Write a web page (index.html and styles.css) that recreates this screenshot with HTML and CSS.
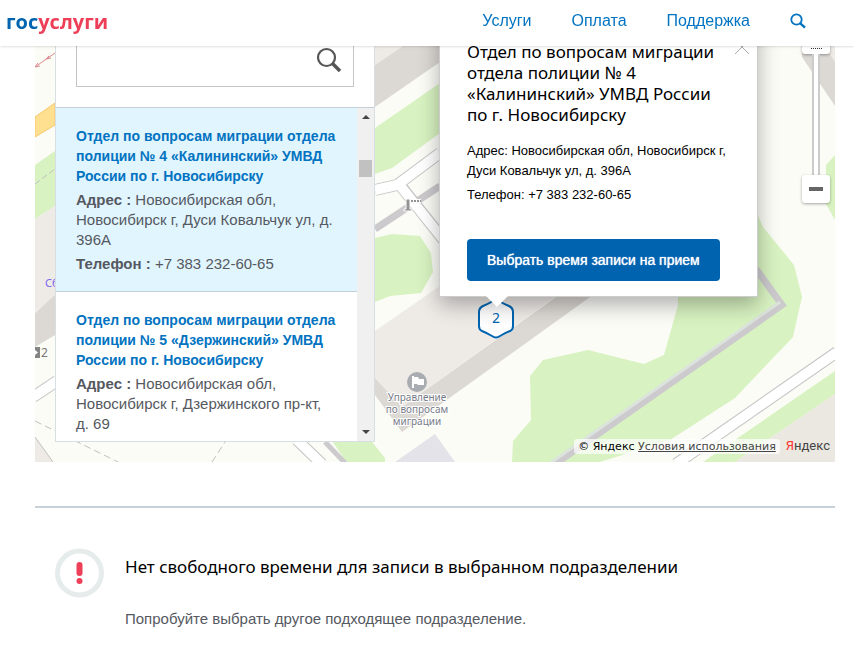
FILE: index.html
```html
<!DOCTYPE html>
<html lang="ru">

<head>
    <meta charset="UTF-8" />
    <meta name="viewport" content="width=device-width, initial-scale=1.0" />
    <title>Запись на прием</title>
    <link rel="stylesheet" href="styles.css">
</head>

<body>
    <!-- HEADER -->
    <header class="header">
        <a class="logo" href="#"><span class="logo-blue">гос</span><span class="logo-red">услуги</span></a>
        <nav class="nav">
            <a href="#">Услуги</a>
            <a href="#">Оплата</a>
            <a href="#">Поддержка</a>
            <button class="nav-search" type="button" aria-label="Поиск">
                <svg width="16" height="16" viewBox="0 0 16 16" fill="none" stroke="#0173c1">
                    <circle cx="6.5" cy="6.5" r="5.2" stroke-width="1.8" />
                    <path d="M10.3 10.3L15 14.6" stroke-width="2.4" />
                </svg>
            </button>
        </nav>
    </header>

    <main class="content">
        <!-- MAP -->
        <section class="map">
            <svg class="map-canvas" viewBox="35 0 800 462" preserveAspectRatio="xMinYMin slice" aria-hidden="true">
                <rect x="35" width="800" height="462" fill="#fbfcf6" />

                <!-- parks -->
                <g fill="#d8f2c1">
                    <path d="M35 165L55 151V206L35 219z" />
                    <path d="M375 128L440 83V133L392 168L375 174z" />
                    <path d="M375 238L392 234L420 236L431 253L433 272L421 293L390 296L375 302z" />
                    <path d="M333 442H372L385 458V462H346z" />
                    <path d="M512 462L513 441L531 420L530 376L543 360L588 350L644 364L664 355L678 305V213H757L763 227L794 265L802 297L793 337L735 398L670 440L600 462z" />
                    <path d="M703 462L835 371V394L735 462z" />
                    <path d="M835 155L826 165V204L835 220z" />
                </g>

                <!-- buildings -->
                <g fill="#eeebe7">
                    <path d="M35 219L55 206V296L35 312z" />
                    <path d="M35 437L53 462H35z" />
                    <path d="M375 46H403L375 65z" />
                    <path d="M375 331L440 286H570L402 407L375 378z" />
                    <path d="M825 46H835V62z" />
                </g>
                <path d="M735 462L835 394V462z" fill="#eae8e0" />
                <g fill="#dcd8d4">
                    <path d="M35 313L55 295V335L35 347z" />
                    <path d="M375 65L403 46H440V62L375 107z" />
                    <path d="M375 378L402 407L570 287H604L402 432L375 395z" />
                    <path d="M802 46H825L835 62V106L802 57z" />
                </g>
                <path d="M395 462L435 434L455 462z" fill="#e4e3e9" />

                <!-- walls -->
                <g fill="none" stroke="#cccacd" stroke-width="7">
                    <path d="M375 229L440 186" />
                    <path d="M555 464L782 305L756 269" />
                    <path d="M325 442L346 464" stroke-width="5" />
                </g>
                <path d="M549 464L780 302" stroke="#dce3dd" stroke-width="3" />

                <!-- roads -->
                <path d="M35 117L55 103V125L35 137z" fill="#ffe091" stroke="#f5c86c" />
                <g fill="none" stroke="#c4c4c4" stroke-width="12">
                    <path d="M375 190L397 185L440 153" />
                    <path d="M400 185L450 248" />
                    <path d="M33 397L57 381" />
                    <path d="M297 440L322 464" />
                    <path d="M676 464L837 352" />
                </g>
                <g fill="none" stroke="#fff" stroke-width="10">
                    <path d="M375 190L397 185L440 153" />
                    <path d="M398 183L450 248" />
                    <path d="M33 397L57 381" />
                    <path d="M297 440L322 464" />
                    <path d="M676 464L837 352" />
                </g>
                <g fill="none" stroke="#c0c0c0">
                    <path d="M35 184L55 169" stroke-dasharray="6 3" />
                    <path d="M35 421L118 462" stroke-dasharray="7 4" />
                    <path d="M212 462L225 442" stroke-dasharray="7 4" />
                    <path d="M35 437L53 462" />
                </g>
                <path d="M35 67L55 53M35 67l3-4M35 67l5-1M46 59l3-3M46 59l5-1" fill="none" stroke="#dd8b90" />

                <!-- barrier sign -->
                <path d="M404 211V209H406V199H410V209H412V211z" fill="#949494" stroke="#fff" />
                <path d="M410 201H421" stroke="#fff" stroke-width="4" />
                <path d="M411 201H421" stroke="#949494" stroke-width="2" stroke-dasharray="2 1" />

                <!-- office sign -->
                <circle cx="417" cy="382" r="10" fill="#a9acb1" />
                <path d="M413 376V388" stroke="#fff" stroke-width="2" />
                <path d="M413 377H418L419 379H424V385H418L417 384H413z" fill="#fff" />

                <g class="map-labels">
                    <text x="417" y="401">Управление</text>
                    <text x="417" y="413">по вопросам</text>
                    <text x="417" y="425">миграции</text>
                </g>
                <text class="map-shop" x="45" y="287">Сб</text>
                <path d="M35 347h5v11h-5z" fill="#858585" />
                <path d="M35 350l3 2.500-3 2.500z" fill="#fff" />
                <text class="map-house" x="41" y="357">2</text>
            </svg>

            <!-- OFFICES LIST -->
            <div class="panel">
                <div class="panel-search">
                    <label class="search-box">
                        <input type="text" aria-label="Поиск подразделения">
                        <svg width="26" height="26" viewBox="0 0 26 26" fill="none" stroke="#555">
                            <circle cx="10.500" cy="10.500" r="8.500" stroke-width="2.200" />
                            <path d="M16.500 16.500L24 24" stroke-width="3.600" />
                        </svg>
                    </label>
                </div>
                <div class="panel-body">
                    <ul class="offices">
                        <li class="office selected">
                            <a href="#">Отдел по вопросам миграции отдела полиции № 4 «Калининский» УМВД России по г. Новосибирску</a>
                            <p><b>Адрес :</b> Новосибирская обл, Новосибирск г, Дуси Ковальчук ул, д. 396А</p>
                            <p><b>Телефон :</b> +7 383 232-60-65</p>
                        </li>
                        <li class="office">
                            <a href="#">Отдел по вопросам миграции отдела полиции № 5 «Дзержинский» УМВД России по г. Новосибирску</a>
                            <p><b>Адрес :</b> Новосибирская обл, Новосибирск г, Дзержинского пр-кт, д. 69</p>
                        </li>
                    </ul>
                    <div class="scrollbar" aria-hidden="true">
                        <span class="arrow-up"></span>
                        <span class="thumb"></span>
                        <span class="arrow-down"></span>
                    </div>
                </div>
            </div>

            <!-- MARKER -->
            <div class="marker">
                <svg width="38" height="40" viewBox="0 0 38 40">
                    <path d="M16 2Q19 0.500 22 2Q27 5 32 7Q36 9 36 13V27Q36 31 33 32Q28 34 23 37Q19 40 15 37Q10 34 5 32Q2 31 2 27V13Q2 9 6 7Q11 5 16 2z" fill="#fff" stroke="#0065b1" stroke-width="2" />
                </svg>
                <span>2</span>
            </div>

            <!-- BALLOON -->
            <div class="balloon">
                <button class="balloon-close" type="button" aria-label="Закрыть">
                    <svg width="16" height="16" viewBox="0 0 16 16" stroke="#aaa">
                        <path d="M1 1L15 15M15 1L1 15" />
                    </svg>
                </button>
                <h2>Отдел по вопросам миграции отдела полиции № 4 «Калининский» УМВД России по г. Новосибирску</h2>
                <p>Адрес: Новосибирская обл, Новосибирск г, Дуси Ковальчук ул, д. 396А</p>
                <p>Телефон: +7 383 232-60-65</p>
                <button class="btn" type="button">Выбрать время записи на прием</button>
            </div>

            <!-- ZOOM -->
            <div class="zoom">
                <button class="zoom-slider" type="button" aria-label="Масштаб"><span></span></button>
                <div class="zoom-track"></div>
                <button class="zoom-out" type="button" aria-label="Уменьшить"><span></span></button>
            </div>

            <div class="copyright">
                <span class="terms">© Яндекс <a href="#">Условия использования</a></span>
                <a class="yandex" href="#"><span>Я</span>ндекс</a>
            </div>
        </section>

        <!-- MESSAGE -->
        <section class="message">
            <svg class="message-icon" width="50" height="50" viewBox="0 0 50 50">
                <circle cx="24.500" cy="25" r="22" fill="none" stroke="#e6ebeb" stroke-width="5" />
                <rect x="21.500" y="14" width="6" height="14" rx="3" fill="#ee3f58" />
                <circle cx="24.500" cy="33" r="3" fill="#ee3f58" />
            </svg>
            <div>
                <h3>Нет свободного времени для записи в выбранном подразделении</h3>
                <p>Попробуйте выбрать другое подходящее подразделение.</p>
            </div>
        </section>
    </main>
</body>

</html>
```
FILE: styles.css
```css
* {
    box-sizing: border-box;
}

body {
    margin: 0;
    background: #fff;
    color: #000;
    font-family: "Liberation Sans", Arial, sans-serif;
}

h2,
h3,
p,
ul {
    margin: 0;
    padding: 0;
    font-weight: normal;
}

a {
    color: #0173c1;
    text-decoration: none;
}

button {
    padding: 0;
    border: none;
    background: none;
    font-family: inherit;
    cursor: pointer;
}

svg {
    display: block;
}

/* header */
.header {
    position: fixed;
    top: 0;
    left: 0;
    right: 0;
    z-index: 10;
    height: 46px;
    padding: 0 48px 4px 6px;
    display: flex;
    align-items: center;
    justify-content: space-between;
    background: #fff;
    box-shadow: 0 1px 2px rgba(0, 0, 0, 0.12);
}

.logo {
    font: bold 20px "Open Sans", sans-serif;
}

.logo-blue {
    color: #0065b1;
}

.logo-red {
    color: #ee3f58;
}

.nav {
    display: flex;
    align-items: center;
    gap: 40px;
    font-size: 16px;
}

/* map */
.content {
    margin: 0 19px 0 35px;
}

.map {
    position: relative;
    height: 462px;
    padding-left: 20px;
    overflow: hidden;
}

.map-canvas {
    position: absolute;
    top: 0;
    left: 0;
    width: 100%;
    height: 100%;
}

.map-labels {
    font: 10px "Noto Sans", sans-serif;
    fill: #777b88;
    text-anchor: middle;
    stroke: #fff;
    stroke-width: 2px;
    paint-order: stroke;
}

.map-shop {
    font: 11px "Noto Sans", sans-serif;
    fill: #7b68ee;
}

.map-house {
    font: 12px "Noto Sans", sans-serif;
    fill: #777;
}

/* offices list */
.panel {
    position: relative;
    width: 320px;
    height: 442px;
    display: flex;
    flex-direction: column;
    background: #fff;
    border: 1px solid #d7dfe5;
}

.panel-search {
    padding: 20px;
    border-bottom: 1px solid #c3ced6;
}

.search-box {
    height: 66px;
    padding: 0 11px 0 0;
    display: flex;
    align-items: center;
    border: 1px solid #c5c5c5;
}

.search-box input {
    flex: 1;
    min-width: 0;
    height: 100%;
    padding: 0 12px;
    border: none;
    outline: none;
    font-size: 16px;
}

.search-box svg {
    margin-top: 12px;
}

.panel-body {
    flex: 1;
    min-height: 0;
    display: flex;
}

.offices {
    flex: 1;
    overflow: hidden;
    list-style: none;
}

.office {
    padding: 18px 20px 17px;
    border-bottom: 1px solid #c3ced6;
    color: #55595f;
    font-size: 15px;
    line-height: 20px;
}

.office a {
    display: block;
    font-size: 14px;
    font-weight: bold;
}

.office p {
    margin-top: 4px;
}

.selected {
    background: #e1f5ff;
}

.scrollbar {
    width: 17px;
    padding: 7px 2px;
    display: flex;
    flex-direction: column;
    align-items: center;
    background: #f0f0f0;
}

.arrow-up,
.arrow-down {
    border: 4px solid transparent;
    border-top-width: 0;
    border-bottom-color: #444;
}

.arrow-down {
    margin-top: auto;
    border-width: 4px 4px 0;
    border-color: #444 transparent transparent;
}

.thumb {
    width: 13px;
    height: 17px;
    margin-top: 41px;
    background: #c1c1c1;
}

/* marker and balloon */
.marker {
    position: absolute;
    top: 299px;
    left: 442px;
    width: 38px;
    height: 40px;
}

.marker span {
    position: absolute;
    inset: 0;
    color: #0065b1;
    font: 14px/38px "Noto Sans", sans-serif;
    text-align: center;
}

.balloon {
    position: absolute;
    top: 0;
    left: 404px;
    width: 319px;
    padding: 40px 30px 15px 27px;
    background: #fff;
    border: 1px solid #ccc;
    box-shadow: 0 8px 20px rgba(0, 0, 0, 0.3);
    font-size: 13px;
    line-height: 20px;
}

.balloon::after {
    content: "";
    position: absolute;
    top: 100%;
    left: 46px;
    border: 11px solid transparent;
    border-top-color: #fff;
    border-bottom-width: 0;
}

.balloon-close {
    position: absolute;
    top: 45px;
    right: 7px;
    height: 9px;
    display: flex;
    align-items: flex-end;
    overflow: hidden;
}

.balloon h2 {
    margin-bottom: 16px;
    font: 17px/21px "Noto Sans", sans-serif;
}

.balloon p {
    margin-bottom: 4px;
}

.btn {
    height: 42px;
    margin-top: 30px;
    padding: 0 20px;
    border-radius: 4px;
    background: #0063b0;
    color: #fff;
    font-size: 14px;
    text-shadow: 0 0 1px #fff;
    white-space: nowrap;
}

/* zoom */
.zoom {
    position: absolute;
    top: 26px;
    right: 5px;
    display: flex;
    flex-direction: column;
    align-items: center;
}

.zoom-slider,
.zoom-out {
    width: 28px;
    height: 28px;
    display: flex;
    align-items: center;
    justify-content: center;
    background: #fff;
    border-radius: 3px;
    box-shadow: 0 1px 3px rgba(0, 0, 0, 0.35);
}

.zoom-slider {
    align-items: flex-end;
    padding-bottom: 5px;
}

.zoom-slider span {
    width: 11px;
    border-top: 1px dotted #333;
}

.zoom-out span {
    width: 14px;
    height: 4px;
    background: #666;
}

.zoom-track {
    width: 8px;
    height: 121px;
    background: #fff;
    border: 2px solid #ccc;
    border-width: 0 2px;
}

/* copyright */
.copyright {
    position: absolute;
    right: 5px;
    bottom: 5px;
    display: flex;
    align-items: center;
    gap: 6px;
}

.terms {
    padding: 0 4px;
    border-radius: 3px;
    background: rgba(255, 255, 255, 0.7);
    font: 11px/15px "DejaVu Sans", sans-serif;
}

.terms a {
    color: #444;
    text-decoration: underline;
}

.yandex {
    color: #444;
    font: 13px/22px Roboto, sans-serif;
}

.yandex span {
    color: #f33;
}

/* message */
.message {
    margin-top: 44px;
    padding: 40px 20px;
    display: flex;
    gap: 20px;
    border-top: 2px solid #c9d1d8;
}

.message-icon {
    flex: none;
}

.message h3 {
    margin-top: 6px;
    font: 17px/26px "Noto Sans", sans-serif;
}

.message p {
    margin-top: 29px;
    color: #55595f;
    font-size: 15px;
    line-height: 20px;
}
```
